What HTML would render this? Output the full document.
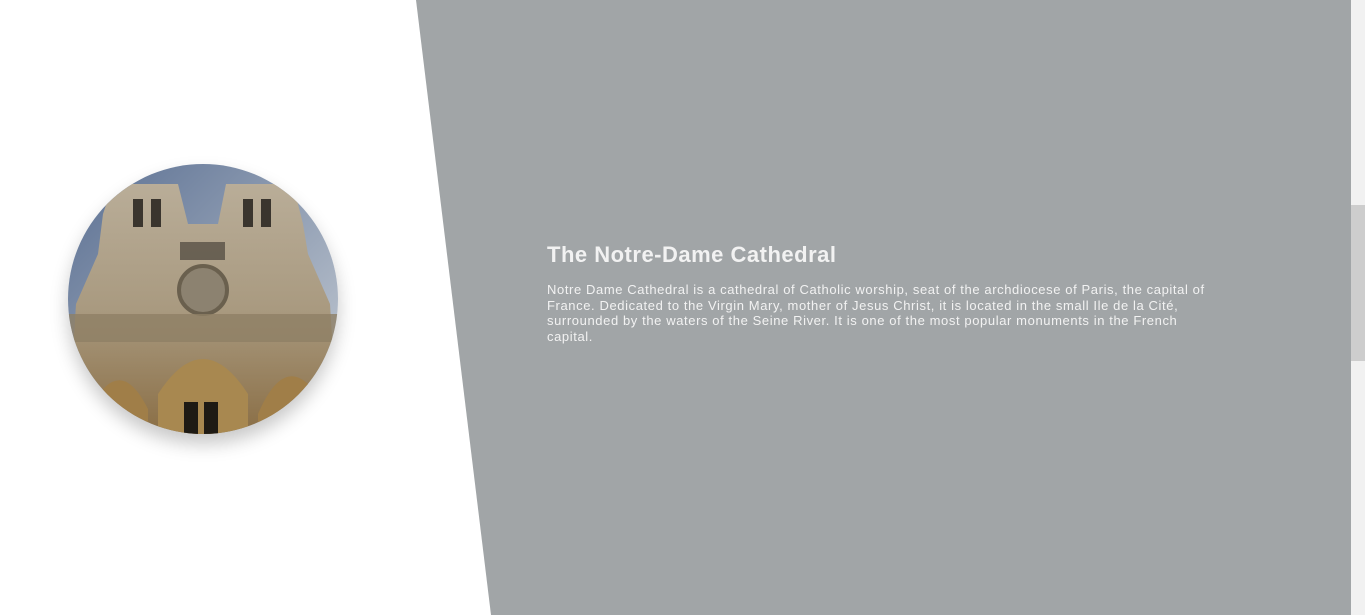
<!DOCTYPE html>
<html><head><meta charset="utf-8"><style>
html,body{margin:0;padding:0;width:1365px;height:615px;overflow:hidden;background:#fff;font-family:"Liberation Sans",sans-serif}
.bg{position:absolute;left:0;top:0;width:1351px;height:615px;background:#a1a5a7;clip-path:polygon(416px 0,1351px 0,1351px 615px,491px 615px)}
.sb{position:absolute;left:1351px;top:0;width:14px;height:615px;background:#f1f1f1}
.th{position:absolute;left:1351px;top:205px;width:14px;height:156px;background:#cdcdcd}
.circ{position:absolute;left:68px;top:164px;width:270px;height:270px;border-radius:50%;overflow:hidden;box-shadow:0 10px 18px rgba(0,0,0,.22)}
h1{position:absolute;left:547px;top:242px;margin:0;font-size:22px;font-weight:bold;color:#f2f2f2;letter-spacing:0.5px}
p{position:absolute;left:547px;top:282px;margin:0;width:672px;font-size:13px;line-height:15.5px;color:#f2f2f2;letter-spacing:0.6px}
</style></head><body>
<div class="bg"></div><div class="sb"></div><div class="th"></div>
<div class="circ"><svg width="270" height="270" viewBox="0 0 270 270">
<defs><linearGradient id="sky" x1="0" y1="0" x2="1" y2="1"><stop offset="0" stop-color="#5a6f92"/><stop offset="1" stop-color="#c9cfd6"/></linearGradient>
<linearGradient id="st" x1="0" y1="0" x2="0" y2="1"><stop offset="0" stop-color="#b9ad98"/><stop offset=".5" stop-color="#a99a80"/><stop offset="1" stop-color="#8a6e45"/></linearGradient></defs>
<rect width="270" height="270" fill="url(#sky)"/>
<path d="M0 270 L8 140 L30 90 L35 50 L45 20 L110 20 L120 60 L150 60 L158 20 L225 20 L235 60 L240 90 L262 140 L270 270Z" fill="url(#st)"/>
<g fill="#3a352e"><rect x="65" y="35" width="10" height="28"/><rect x="83" y="35" width="10" height="28"/><rect x="175" y="35" width="10" height="28"/><rect x="193" y="35" width="10" height="28"/>
<rect x="112" y="78" width="45" height="18" opacity=".6"/></g>
<circle cx="135" cy="126" r="24" fill="#8c8270" stroke="#6a604e" stroke-width="4"/>
<rect x="0" y="150" width="270" height="28" fill="#8f7f65" opacity=".8"/>
<path d="M90 270 L90 230 Q135 160 180 230 L180 270Z" fill="#a88850"/>
<path d="M20 250 Q50 185 80 245 L80 270 L20 270Z" fill="#a07e48"/>
<path d="M190 250 Q220 180 255 240 L255 270 L190 270Z" fill="#a07e48"/>
<rect x="116" y="238" width="14" height="32" fill="#1e1a14"/><rect x="136" y="238" width="14" height="32" fill="#1e1a14"/>
</svg></div>
<h1>The Notre-Dame Cathedral</h1>
<p>Notre Dame Cathedral is a cathedral of Catholic worship, seat of the archdiocese of Paris, the capital of France. Dedicated to the Virgin Mary, mother of Jesus Christ, it is located in the small Ile de la Cité, surrounded by the waters of the Seine River. It is one of the most popular monuments in the French capital.</p>
</body></html>
